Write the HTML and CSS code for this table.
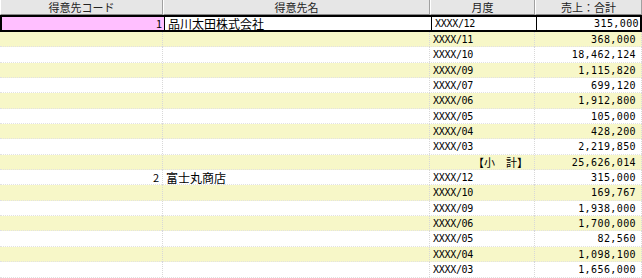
FILE: index.html
```html
<!DOCTYPE html>
<html lang="ja">
<head>
<meta charset="utf-8">
<link rel="stylesheet" href="styles.css">
</head>
<body>
<div class="grid">
  <div class="hd">得意先コード</div>
  <div class="hd">得意先名</div>
  <div class="hd">月度</div>
  <div class="hd">売上：合計</div>

  <div class="row sel"><div class="c code pink">1</div><div class="c name">品川太田株式会社</div><div class="c mon">XXXX/12</div><div class="c amt">315,000</div></div>
  <div class="row y"><div class="c code"></div><div class="c name"></div><div class="c mon">XXXX/11</div><div class="c amt">368,000</div></div>
  <div class="row"><div class="c code"></div><div class="c name"></div><div class="c mon">XXXX/10</div><div class="c amt">18,462,124</div></div>
  <div class="row y"><div class="c code"></div><div class="c name"></div><div class="c mon">XXXX/09</div><div class="c amt">1,115,820</div></div>
  <div class="row"><div class="c code"></div><div class="c name"></div><div class="c mon">XXXX/07</div><div class="c amt">699,120</div></div>
  <div class="row y"><div class="c code"></div><div class="c name"></div><div class="c mon">XXXX/06</div><div class="c amt">1,912,800</div></div>
  <div class="row"><div class="c code"></div><div class="c name"></div><div class="c mon">XXXX/05</div><div class="c amt">105,000</div></div>
  <div class="row y"><div class="c code"></div><div class="c name"></div><div class="c mon">XXXX/04</div><div class="c amt">428,200</div></div>
  <div class="row"><div class="c code"></div><div class="c name"></div><div class="c mon">XXXX/03</div><div class="c amt">2,219,850</div></div>
  <div class="row y"><div class="c code"></div><div class="c name"></div><div class="c mon sub">【小　計】</div><div class="c amt">25,626,014</div></div>
  <div class="row"><div class="c code">2</div><div class="c name">富士丸商店</div><div class="c mon">XXXX/12</div><div class="c amt">315,000</div></div>
  <div class="row y"><div class="c code"></div><div class="c name"></div><div class="c mon">XXXX/10</div><div class="c amt">169,767</div></div>
  <div class="row"><div class="c code"></div><div class="c name"></div><div class="c mon">XXXX/09</div><div class="c amt">1,938,000</div></div>
  <div class="row y"><div class="c code"></div><div class="c name"></div><div class="c mon">XXXX/06</div><div class="c amt">1,700,000</div></div>
  <div class="row"><div class="c code"></div><div class="c name"></div><div class="c mon">XXXX/05</div><div class="c amt">82,560</div></div>
  <div class="row y"><div class="c code"></div><div class="c name"></div><div class="c mon">XXXX/04</div><div class="c amt">1,098,100</div></div>
  <div class="row"><div class="c code"></div><div class="c name"></div><div class="c mon">XXXX/03</div><div class="c amt">1,656,000</div></div>
</div>
</body>
</html>
```
FILE: styles.css
```css
html, body {
  margin: 0;
  padding: 0;
  background: #ffffff;
  overflow: hidden;
}
body {
  font-family: "Noto Sans CJK JP", "DejaVu Sans", sans-serif;
  font-size: 11px;
  color: #000;
}
.grid {
  display: grid;
  grid-template-columns: 163px 267px 105px 107px;
  width: 642px;
}
.hd {
  height: 15px;
  box-sizing: border-box;
  background: #e6e6e6;
  border-right: 1px solid #a0a0a0;
  border-left: 1px solid #ffffff;
  border-bottom: 1px solid #888888;
  text-align: center;
  line-height: 14px;
  color: #222;
  font-size: 11px;
  overflow: visible;
  white-space: nowrap;
}
.row {
  grid-column: 1 / -1;
  display: grid;
  grid-template-columns: 163px 267px 105px 107px;
  height: 15.35px;
  box-sizing: border-box;
  border-bottom: 1px dotted #e2e2e2;
}
.row.y {
  background: #f7f7c8;
}
.row.sel {
  height: 17px;
  border: 2px solid #000;
}
.row.sel .c {
  border-right: 1px solid #000;
  line-height: 13px;
}
.row.sel .c:last-child {
  border-right: none;
}
.c {
  box-sizing: border-box;
  border-right: 1px dotted #d8d8d8;
  line-height: 15px;
  white-space: nowrap;
  overflow: visible;
}
.code {
  text-align: right;
  padding-right: 3px;
}
.pink {
  background: #ffbfff;
}
.name {
  padding-left: 3px;
  font-size: 12px;
}
.mon {
  padding-left: 3px;
  font-family: "DejaVu Sans Mono", monospace;
  font-size: 10px;
  letter-spacing: -0.3px;
}
.mon.sub {
  text-align: right;
  padding-right: 6px;
  font-family: "Noto Sans CJK JP", sans-serif;
  font-size: 11px;
  letter-spacing: 0;
}
.amt {
  text-align: right;
  padding-right: 5px;
  font-family: "DejaVu Sans Mono", monospace;
  font-size: 10px;
  letter-spacing: 0.4px;
}
.sel .code { padding-right: 2px; }
```
